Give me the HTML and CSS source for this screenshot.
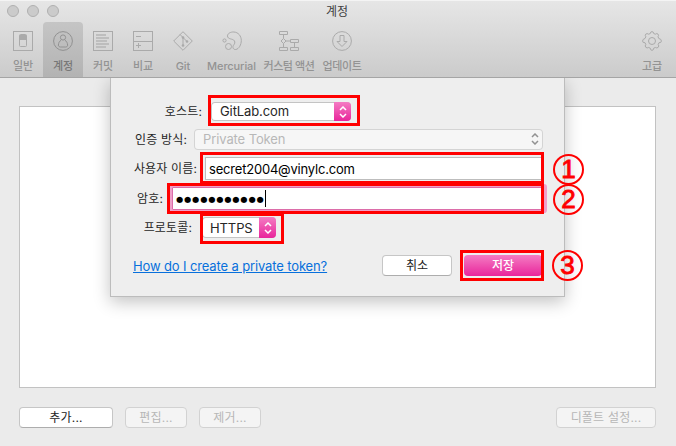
FILE: index.html
```html
<!DOCTYPE html>
<html lang="ko">
<head>
<meta charset="utf-8">
<title>계정</title>
<link rel="stylesheet" href="styles.css">
</head>
<body>
<div class="window">
  <header class="chrome">
    <div class="titlebar">
      <div class="lights"><i></i><i></i><i></i></div>
      <h1>계정</h1>
    </div>
    <nav class="toolbar">
      <div class="tool">
        <svg viewBox="0 0 20 20"><rect x=".5" y=".5" width="19" height="19"/><rect x="6.5" y="3.5" width="7" height="12" rx="1"/><path class="solid" d="M6.5 4h7v5h-7z"/></svg>
        <span>일반</span>
      </div>
      <div class="tool selected">
        <svg viewBox="0 0 20 20"><circle cx="10" cy="10" r="9.4"/><circle cx="10" cy="6.5" r="2.6"/><path d="M8 9.3C6.2 10.3 5.6 12 5.4 14c-.1 1.3 1 2 2 2h5.2c1.2 0 2.1-.7 2-2-.2-2-.8-3.7-2.6-4.7"/></svg>
        <span>계정</span>
      </div>
      <div class="tool">
        <svg viewBox="0 0 20 20"><rect x=".5" y=".5" width="19" height="19"/><path class="thick" d="M3 4h10M3 7h13M3 10h11M3 13h13M3 16h10"/></svg>
        <span>커밋</span>
      </div>
      <div class="tool">
        <svg viewBox="0 0 20 20"><rect x=".5" y=".5" width="19" height="19"/><path d="M.5 10.500h19M3 5.500h5M3 14.500h5M5.500 12v5"/></svg>
        <span>비교</span>
      </div>
      <div class="tool">
        <svg viewBox="0 0 20 20"><path d="M10 .7 19.300 10 10 19.300 .7 10zM7 3.500l3 3v8M10 6.500l4 4"/><circle class="dot" cx="10" cy="6.500" r="1.300"/><circle class="dot" cx="10" cy="14.500" r="1.300"/><circle class="dot" cx="14" cy="10.500" r="1.300"/></svg>
        <span>Git</span>
      </div>
      <div class="tool wide-m">
        <svg viewBox="0 0 20 20"><circle cx="2.500" cy="9.500" r="1.600"/><circle cx="6.500" cy="15.500" r="3"/><path d="M5.500 5C5.500 2.500 8.500.8 11.800 1c4.500.2 7.500 4 7.500 8.500 0 4-2.300 8.500-5.500 9-2.500.3-3.600-2.200-2.400-4 1.100-1.600 2-3 1-4.700C11 7.500 5.500 8.500 5.500 5z"/></svg>
        <span>Mercurial</span>
      </div>
      <div class="tool wide-c">
        <svg viewBox="0 0 20 20"><path d="M.5.500h8v3h-8zM4.500 3.500v4M4.500 12.500v4M.5 16.500h8v3h-8zM4.500 7.500 7 10l-2.500 2.500L2 10zM7 10h4.500M11.500 8.500h8v3h-8zM15.500 11.500v5M11.500 16.500h8v3h-8z"/></svg>
        <span>커스텀 액션</span>
      </div>
      <div class="tool wide-u">
        <svg viewBox="0 0 20 20"><circle cx="10" cy="10" r="9.400"/><path d="M8 4.500h4v6h3l-5 5-5-5h3z"/></svg>
        <span>업데이트</span>
      </div>
      <div class="tool last">
        <svg viewBox="0 0 20 20"><path d="M8.300 2.500Q8.500.6 10 .6t1.700 1.900l1.600.7q1.600-1.200 2.700-.1t0 2.700l.8 1.700Q19.400 8 19.400 10t-2.400 1.700l-.8 1.700q1.200 1.700 0 2.900t-2.900.2l-1.600.7q-.2 2.200-1.700 2.200t-1.700-2.200l-1.600-.7q-1.700 1-2.900-.2t0-2.900L3 11.700Q.6 12 .6 10T3 7.500l.8-1.700q-1.100-1.600 0-2.700t2.900.1z"/><circle cx="10" cy="10" r="3.500"/></svg>
        <span>고급</span>
      </div>
    </nav>
  </header>

  <main class="content">
    <div class="list"></div>
    <div class="list-actions">
      <button class="btn add">추가...</button>
      <button class="btn edit" disabled>편집...</button>
      <button class="btn remove" disabled>제거...</button>
      <button class="btn defaults" disabled>디폴트 설정...</button>
    </div>
  </main>

  <form class="sheet">
    <div class="row host">
      <label>호스트:</label>
      <div class="select"><span>GitLab.com</span><b><svg viewBox="0 0 8 12"><path d="M1 4l3-3 3 3M1 8l3 3 3-3"/></svg></b></div>
      <div class="mark"></div>
    </div>
    <div class="row auth">
      <label>인증 방식:</label>
      <div class="select off"><span>Private Token</span><b><svg viewBox="0 0 8 12"><path d="M1 4l3-3 3 3M1 8l3 3 3-3"/></svg></b></div>
    </div>
    <div class="row user">
      <label>사용자 이름:</label>
      <div class="field"><span>secret2004@vinylc.com</span></div>
      <div class="mark"></div>
      <div class="num">1</div>
    </div>
    <div class="row pass">
      <label>암호:</label>
      <div class="field focus"><span>●●●●●●●●●●●</span><i class="caret"></i></div>
      <div class="mark"></div>
      <div class="num">2</div>
    </div>
    <div class="row proto">
      <label>프로토콜:</label>
      <div class="select"><span>HTTPS</span><b><svg viewBox="0 0 8 12"><path d="M1 4l3-3 3 3M1 8l3 3 3-3"/></svg></b></div>
      <div class="mark"></div>
    </div>
    <div class="row foot">
      <a>How do I create a private token?</a>
      <button type="button" class="btn cancel">취소</button>
      <button type="button" class="btn save">저장</button>
      <div class="mark"></div>
      <div class="num">3</div>
    </div>
  </form>
</div>
</body>
</html>
```

FILE: styles.css
```css
* { box-sizing: border-box; }

body {
  margin: 0;
  background: #ececec;
  font: 13px/16px Inter, "Noto Sans CJK KR", sans-serif;
  color: #262626;
}

.window {
  position: relative;
  width: 676px;
  height: 446px;
  overflow: hidden;
  background: #ebebeb;
}

/* Title bar and toolbar */
.chrome {
  height: 78px;
  background: linear-gradient(#e6e6e6, #cbcbcb);
  border-top: 1px solid #f4f4f4;
  border-bottom: 1px solid #a5a5a5;
}

.titlebar {
  height: 21px;
  display: grid;
  grid-template-columns: 100px 1fr 102px;
  align-items: center;
}

.lights { display: flex; gap: 8px; padding-left: 7px; margin-top: -1px; }

.lights i {
  width: 12px;
  height: 12px;
  border: 1px solid #b0b0b0;
  border-radius: 50%;
  background: #cbcbcb;
}

h1 {
  margin: 0;
  font-size: 12px;
  font-weight: 400;
  line-height: 20px;
  text-align: center;
  color: #404040;
}

.toolbar { display: flex; height: 55px; padding: 0 4px 0 3px; }

.tool {
  width: 40px;
  padding-top: 9px;
  display: flex;
  flex-direction: column;
  align-items: center;
  border-radius: 4px 4px 0 0;
  font-size: 11px;
  font-weight: 500;
  color: #939393;
  white-space: nowrap;
}

.tool svg {
  width: 20px;
  height: 20px;
  fill: none;
  stroke: #aaa;
  stroke-width: 1;
}

.tool span { margin-top: 7px; line-height: 16px; }
.tool .solid { fill: #aaa; stroke: none; }
.tool .dot { fill: #aaa; stroke: none; }
.tool .thick { stroke-width: 1.5; stroke: #b5b5b5; }
.tool.selected { background: linear-gradient(#c5c5c5, #b3b3b3); color: #777; }
.tool.selected svg { stroke: #919191; }
.tool.wide-m { width: 57px; letter-spacing: -.1px; }
.tool.wide-c { width: 58px; letter-spacing: -.4px; }
.tool.wide-u { width: 48px; letter-spacing: -.4px; }
.tool.last { margin-left: auto; }

/* Account list */
.content { padding: 28px 20px 0 19px; }
.list { height: 282px; background: #fff; border: 1px solid #c2c2c2; }
.list-actions { display: flex; margin-top: 19px; }

.btn {
  height: 21px;
  padding: 0;
  font: 12px/16px Inter, "Noto Sans CJK KR", sans-serif;
  color: #222;
  background: #fff;
  border: 1px solid #c6c6c6;
  border-bottom-color: #adadad;
  border-radius: 4px;
}

.btn:disabled { color: #b7b7b7; background: #f4f4f4; border-color: #d2d2d2; }
.add { width: 94px; letter-spacing: .2px; }
.edit { width: 62px; margin-left: 12px; letter-spacing: .2px; }
.remove { width: 62px; margin-left: 12px; letter-spacing: .2px; }
.defaults { width: 100px; margin-left: auto; letter-spacing: .2px; }

/* Account sheet */
.sheet {
  position: absolute;
  left: 110px;
  top: 78px;
  width: 455px;
  height: 219px;
  padding-top: 18px;
  background: #eee;
  border: 1px solid #bcbcbc;
  border-top: 0;
  box-shadow: 0 5px 16px rgba(0, 0, 0, .24);
  clip-path: inset(0 -40px -40px -40px);
}

.row { position: relative; display: flex; align-items: center; }
.row label { text-align: right; font-size: 12px; letter-spacing: .15px; white-space: nowrap; }

.select {
  display: flex;
  justify-content: space-between;
  height: 21px;
  overflow: hidden;
  background: #fff;
  border-radius: 4px;
  box-shadow: inset 0 0 0 1px #c4c4c4;
}

.select span { padding-left: 9px; line-height: 21px; letter-spacing: -.1px; }

.select b {
  width: 17px;
  display: grid;
  place-items: center;
  background: linear-gradient(#f47cc3, #e9259b);
}

.select svg { width: 8px; height: 12px; fill: none; stroke: #fff; stroke-width: 1.5; }
.select.off { color: #b8b8b8; background: #f6f6f6; box-shadow: inset 0 0 0 1px #d4d4d4; }
.select.off b { background: none; }
.select.off svg { stroke: #929292; }

.field {
  display: flex;
  align-items: center;
  height: 23px;
  padding-left: 3px;
  background: #fff;
  border: 1px solid #bdbdbd;
  color: #000;
  letter-spacing: -.2px;
}

.field.focus { border-color: #dc6da9; box-shadow: 0 0 0 3px #f0a0c9; }
.caret { width: 1px; height: 17px; background: #000; }

.host { height: 31px; }
.host label { width: 91px; margin-right: 9px; }
.host .select { width: 140px; height: 19px; }
.host .select span { line-height: 19px; }
.auth { height: 23px; padding-top: 1px; }
.auth label { width: 76px; margin-right: 7px; padding-top: 1px; }
.auth .select { width: 349px; }
.user { height: 36px; }
.user label { width: 86px; margin-right: 8px; padding-top: 1px; }
.user .field { width: 338px; padding-top: 2px; }
.pass { height: 24px; padding-top: 1px; }
.pass label { width: 52px; margin-right: 9px; }
.pass .field { width: 372px; border-radius: 1px; }

.pass .field span {
  padding-top: 1px;
  font: 8.2px/16px "DejaVu Sans", sans-serif;
  letter-spacing: .9px;
}

.proto { height: 35px; }
.proto label { width: 81px; margin-right: 10px; }
.proto .select { width: 74px; }
.proto .select span { padding-left: 8px; padding-top: 1px; }
.foot { height: 41px; padding-left: 22px; }

.foot a {
  width: 249px;
  color: #0870dc;
  letter-spacing: -.13px;
  text-decoration: underline;
  white-space: nowrap;
}

.cancel { width: 70px; }

.save {
  width: 78px;
  margin-left: 12px;
  color: #fff;
  font-weight: 500;
  border: 0;
  background: linear-gradient(#f47cc3, #e9259b);
}

/* Callouts drawn over the form */
.mark { position: absolute; z-index: 2; border: 3px solid #f00; }
.host .mark { left: 97px; top: -1px; width: 152px; height: 31px; }
.user .mark { left: 89px; top: 2px; width: 344px; height: 32px; }
.pass .mark { left: 56px; top: -3px; width: 377px; height: 31px; }
.proto .mark { left: 89px; top: 3px; width: 84px; height: 31px; }
.foot .mark { left: 349px; top: 5px; width: 84px; height: 31px; }

.num {
  position: absolute;
  z-index: 3;
  left: 442px;
  width: 31px;
  height: 31px;
  border: 2px solid #f00;
  border-radius: 50%;
  color: #f00;
  font: 26px/27px "Liberation Sans", sans-serif;
  text-align: center;
  -webkit-text-stroke: .9px #f00;
}

.user .num { top: 4px; }
.pass .num { top: -2px; }
.foot .num { top: 5px; left: 441px; }
```
